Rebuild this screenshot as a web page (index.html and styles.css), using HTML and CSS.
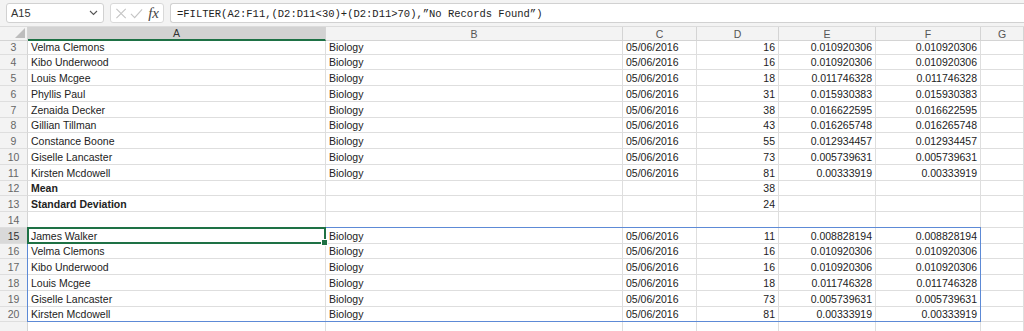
FILE: index.html
```html
<!DOCTYPE html>
<html>
<head>
  <meta charset="utf-8">
  <title>Sheet</title>
  <link rel="stylesheet" href="styles.css">
</head>
<body>
  <div class="toolbar">
    <div class="name-box">
      <span>A15</span>
      <svg class="chevron" width="9" height="6" viewBox="0 0 9 6"><path d="M1 1 L4.5 4.5 L8 1" fill="none" stroke="#555" stroke-width="1.1"/></svg>
    </div>
    <div class="fx-buttons">
      <svg width="13" height="13" viewBox="0 0 13 13"><path d="M1.5 1.5 L11.5 11.5 M11.5 1.5 L1.5 11.5" stroke="#c4c4c4" stroke-width="1.2"/></svg>
      <svg width="14" height="13" viewBox="0 0 14 13"><path d="M1 7 L5 11 L13 2" fill="none" stroke="#c4c4c4" stroke-width="1.2"/></svg>
      <span class="fx">fx</span>
    </div>
    <div class="formula">=FILTER(A2:F11,(D2:D11&lt;30)+(D2:D11&gt;70),”No Records Found”)</div>
  </div>

  <div class="sheet" id="sheet">
    <div class="corner"></div>
    <div class="col-head selected">A</div>
    <div class="col-head">B</div>
    <div class="col-head">C</div>
    <div class="col-head">D</div>
    <div class="col-head">E</div>
    <div class="col-head">F</div>
    <div class="col-head">G</div>
    <div class="spill"></div>
    <div class="active"><span class="handle"></span></div>
  </div>

  <script>
    const rows = [
      [3, 'Velma Clemons', 'Biology', '05/06/2016', '16', '0.010920306', '0.010920306'],
      [4, 'Kibo Underwood', 'Biology', '05/06/2016', '16', '0.010920306', '0.010920306'],
      [5, 'Louis Mcgee', 'Biology', '05/06/2016', '18', '0.011746328', '0.011746328'],
      [6, 'Phyllis Paul', 'Biology', '05/06/2016', '31', '0.015930383', '0.015930383'],
      [7, 'Zenaida Decker', 'Biology', '05/06/2016', '38', '0.016622595', '0.016622595'],
      [8, 'Gillian Tillman', 'Biology', '05/06/2016', '43', '0.016265748', '0.016265748'],
      [9, 'Constance Boone', 'Biology', '05/06/2016', '55', '0.012934457', '0.012934457'],
      [10, 'Giselle Lancaster', 'Biology', '05/06/2016', '73', '0.005739631', '0.005739631'],
      [11, 'Kirsten Mcdowell', 'Biology', '05/06/2016', '81', '0.00333919', '0.00333919'],
      [12, 'Mean', '', '', '38', '', ''],
      [13, 'Standard Deviation', '', '', '24', '', ''],
      [14, '', '', '', '', '', ''],
      [15, 'James Walker', 'Biology', '05/06/2016', '11', '0.008828194', '0.008828194'],
      [16, 'Velma Clemons', 'Biology', '05/06/2016', '16', '0.010920306', '0.010920306'],
      [17, 'Kibo Underwood', 'Biology', '05/06/2016', '16', '0.010920306', '0.010920306'],
      [18, 'Louis Mcgee', 'Biology', '05/06/2016', '18', '0.011746328', '0.011746328'],
      [19, 'Giselle Lancaster', 'Biology', '05/06/2016', '73', '0.005739631', '0.005739631'],
      [20, 'Kirsten Mcdowell', 'Biology', '05/06/2016', '81', '0.00333919', '0.00333919']
    ];

    const sheet = document.getElementById('sheet');
    const spill = sheet.querySelector('.spill');

    rows.forEach(row => {
      const head = document.createElement('div');
      head.className = 'row-head' + (row[0] === 15 ? ' selected' : '');
      head.textContent = row[0];
      sheet.insertBefore(head, spill);

      for (let i = 1; i <= 7; i++) {
        const cell = document.createElement('div');
        cell.className = 'cell';
        if (i >= 4) cell.classList.add('num');
        if (i === 1 && (row[0] === 12 || row[0] === 13)) cell.classList.add('bold');
        cell.textContent = row[i] || '';
        sheet.insertBefore(cell, spill);
      }
    });

    // row 21 is only partly on screen, keep it empty
    const lastHead = document.createElement('div');
    lastHead.className = 'row-head';
    sheet.insertBefore(lastHead, spill);
    for (let i = 1; i <= 7; i++) {
      const cell = document.createElement('div');
      cell.className = 'cell';
      sheet.insertBefore(cell, spill);
    }
  </script>
</body>
</html>
```

FILE: styles.css
```css
body {
  margin: 0;
  background-color: #fff;
  font-family: 'Liberation Sans', Arial, sans-serif;
  color: #222;
  overflow: hidden;
  height: 331px;
}

.toolbar {
  display: flex;
  align-items: center;
  gap: 6px;
  height: 27px;
  padding: 0 0 0 6px;
  background-color: #f3f3f3;
  border-bottom: 1px solid #dcdcdc;
  box-sizing: border-box;
}

.name-box {
  display: flex;
  align-items: center;
  justify-content: space-between;
  width: 98px;
  height: 20px;
  padding: 0 5px 0 4px;
  box-sizing: border-box;
  background-color: #fff;
  border: 1px solid #d1d1d1;
  border-radius: 3px;
  font-size: 11px;
  color: #333;
}

.fx-buttons {
  display: flex;
  align-items: center;
  gap: 3px;
  width: 54px;
  height: 20px;
  padding: 0 4px;
  box-sizing: border-box;
  background-color: #fff;
  border: 1px solid #d9d9d9;
  border-radius: 3px;
}

.fx {
  font-family: 'Liberation Serif', serif;
  font-style: italic;
  font-size: 15px;
  color: #444;
  margin-left: 2px;
}

.formula {
  flex: 1;
  height: 20px;
  line-height: 20px;
  padding-left: 6px;
  box-sizing: border-box;
  background-color: #fff;
  border: 1px solid #d1d1d1;
  border-right: none;
  border-radius: 3px 0 0 3px;
  font-family: 'Liberation Mono', monospace;
  font-size: 10.5px;
  color: #222;
  white-space: nowrap;
}

.sheet {
  position: relative;
  display: grid;
  grid-template-columns: 28px 298px 297px 74px 82px 97px 105px 1fr;
  grid-template-rows: 14px 13.5px;
  grid-auto-rows: 15.75px;
  font-size: 10.5px;
}

.corner {
  background-color: #f3f3f3;
  border-right: 1px solid #d4d4d4;
  border-bottom: 1px solid #d4d4d4;
  box-sizing: border-box;
  position: relative;
  overflow: hidden;
}

.corner::after {
  content: '';
  position: absolute;
  right: 2px;
  bottom: 2px;
  border-left: 10px solid transparent;
  border-bottom: 10px solid #bdbdbd;
}

.col-head {
  display: flex;
  align-items: center;
  justify-content: center;
  background-color: #f3f3f3;
  border-right: 1px solid #d4d4d4;
  border-bottom: 1px solid #d4d4d4;
  box-sizing: border-box;
  color: #555;
  font-size: 10.5px;
}

.col-head.selected {
  background-color: #d2d2d2;
  border-bottom: 2px solid #1e7145;
  color: #333;
}

.row-head {
  display: flex;
  align-items: flex-end;
  justify-content: center;
  padding-bottom: 1px;
  background-color: #f3f3f3;
  border-right: 1px solid #d4d4d4;
  border-bottom: 1px solid #dedede;
  box-sizing: border-box;
  color: #666;
  font-size: 10.5px;
}

.row-head.selected {
  background-color: #d9d9d9;
  color: #333;
}

.cell {
  display: flex;
  align-items: flex-end;
  padding: 0 3px 1px 3px;
  border-right: 1px solid #dedede;
  border-bottom: 1px solid #dedede;
  box-sizing: border-box;
  white-space: nowrap;
  overflow: hidden;
  color: #222;
}

.cell.num {
  justify-content: flex-end;
}

.cell.bold {
  font-weight: bold;
}

.spill {
  position: absolute;
  grid-row: 14 / 20;
  grid-column: 2 / 8;
  inset: 0;
  margin: -1px 0 0 -1px;
  border: 1px solid #5d8ad6;
  pointer-events: none;
}

.active {
  position: absolute;
  grid-row: 14 / 15;
  grid-column: 2 / 3;
  inset: 0;
  margin: -1px 0 0 -1px;
  border: 2px solid #1e7145;
  pointer-events: none;
}

.handle {
  position: absolute;
  right: -4px;
  bottom: -4px;
  width: 5px;
  height: 5px;
  background-color: #1e7145;
  border: 1px solid #fff;
}
```
